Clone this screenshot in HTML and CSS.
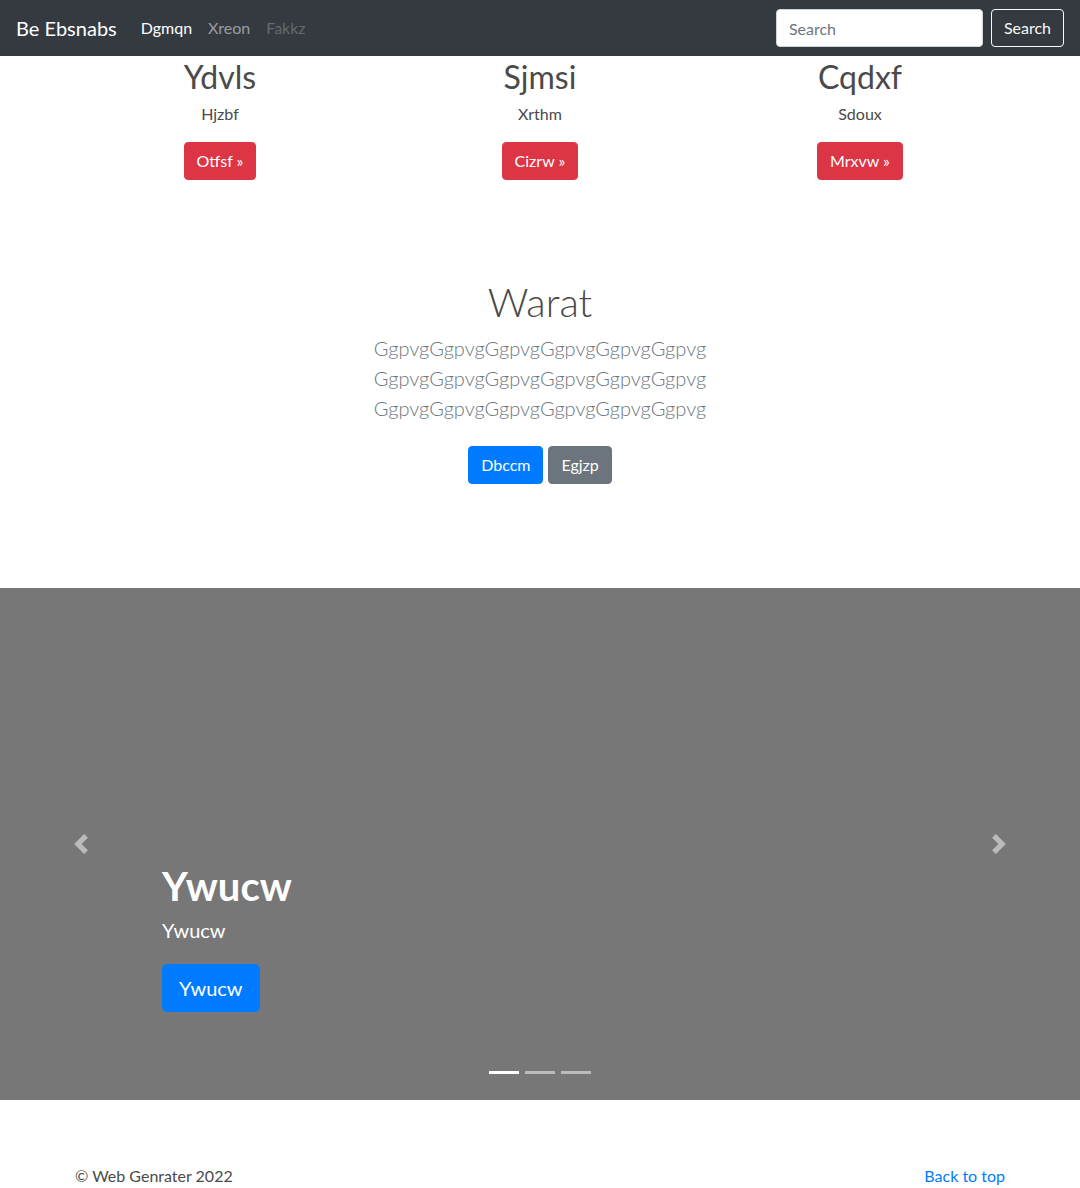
FILE: index.html
```html
<!DOCTYPE html>
<html lang="en">
<head>
<meta charset="utf-8">
<title>Be Ebsnabs</title>
<link rel="stylesheet" href="styles.css">
</head>
<body>
<header class="navbar">
  <a class="brand" href="#">Be Ebsnabs</a>
  <nav class="nav">
    <a class="nav-link active" href="#">Dgmqn</a>
    <a class="nav-link" href="#">Xreon</a>
    <a class="nav-link disabled" href="#">Fakkz</a>
  </nav>
  <form class="search">
    <input class="search-input" type="text" placeholder="Search">
    <button class="btn btn-outline-light" type="button">Search</button>
  </form>
</header>

<main>
  <div class="container marketing">
    <div class="col">
      <h2 class="col-title">Ydvls</h2>
      <p class="col-text">Hjzbf</p>
      <p class="col-action"><a class="btn btn-danger" href="#">Otfsf »</a></p>
    </div>
    <div class="col">
      <h2 class="col-title">Sjmsi</h2>
      <p class="col-text">Xrthm</p>
      <p class="col-action"><a class="btn btn-danger" href="#">Cizrw »</a></p>
    </div>
    <div class="col">
      <h2 class="col-title">Cqdxf</h2>
      <p class="col-text">Sdoux</p>
      <p class="col-action"><a class="btn btn-danger" href="#">Mrxvw »</a></p>
    </div>
  </div>

  <section class="hero">
    <div class="hero-inner">
      <h1 class="hero-title">Warat</h1>
      <p class="lead">GgpvgGgpvgGgpvgGgpvgGgpvgGgpvg GgpvgGgpvgGgpvgGgpvgGgpvgGgpvg GgpvgGgpvgGgpvgGgpvgGgpvgGgpvg</p>
      <p class="hero-actions">
        <a class="btn btn-primary" href="#">Dbccm</a>
        <a class="btn btn-secondary" href="#">Egjzp</a>
      </p>
    </div>
  </section>

  <div class="carousel">
    <ol class="indicators">
      <li class="indicator active"></li>
      <li class="indicator"></li>
      <li class="indicator"></li>
    </ol>
    <div class="caption">
      <h1 class="caption-title">Ywucw</h1>
      <p class="caption-text">Ywucw</p>
      <p class="caption-action"><a class="btn btn-primary btn-lg" href="#">Ywucw</a></p>
    </div>
    <a class="control control-prev" href="#">
      <svg class="control-icon" viewBox="0 0 8 8" width="20" height="20"><path fill="#fff" d="M5.25 0l-4 4 4 4 1.5-1.5L4.25 4l2.5-2.5L5.25 0z"/></svg>
    </a>
    <a class="control control-next" href="#">
      <svg class="control-icon" viewBox="0 0 8 8" width="20" height="20"><path fill="#fff" d="M2.75 0l-1.5 1.5L3.75 4l-2.5 2.5L2.75 8l4-4-4-4z"/></svg>
    </a>
  </div>

  <footer class="container footer">
    <p class="footer-text">© Web Genrater 2022</p>
    <p class="footer-text"><a class="footer-link" href="#">Back to top</a></p>
  </footer>
</main>
</body>
</html>
```

FILE: styles.css
```css
* { box-sizing: border-box; }

html, body {
  margin: 0;
  padding: 0;
}

body {
  font-family: Lato, "Liberation Sans", sans-serif;
  font-size: 16px;
  line-height: 1.5;
  color: #4a4a4a;
  background: #fff;
}

a { text-decoration: none; }

p, h1, h2 { margin: 0; }

/* navbar */
.navbar {
  display: flex;
  align-items: center;
  height: 56px;
  padding: 8px 16px;
  background: #343a40;
}

.brand {
  font-size: 20px;
  line-height: 30px;
  padding: 5px 0;
  margin-right: 16px;
  color: #fff;
}

.nav {
  display: flex;
}

.nav-link {
  padding: 8px;
  color: rgba(255, 255, 255, 0.5);
  line-height: 24px;
}

.nav-link.active { color: #fff; }
.nav-link.disabled { color: rgba(255, 255, 255, 0.25); }

.search {
  margin-left: auto;
  display: flex;
  align-items: center;
}

.search-input {
  width: 207px;
  height: 38px;
  padding: 6px 12px;
  margin-right: 8px;
  font-family: inherit;
  font-size: 16px;
  color: #495057;
  background: #fff;
  border: 1px solid #ced4da;
  border-radius: 4px;
}

.search-input::placeholder { color: #6c757d; }

/* buttons */
.btn {
  display: inline-block;
  padding: 6px 12px;
  font-family: inherit;
  font-size: 16px;
  line-height: 24px;
  border: 1px solid transparent;
  border-radius: 4px;
  color: #fff;
  cursor: pointer;
}

.btn-outline-light {
  background: transparent;
  color: #f8f9fa;
  border-color: #f8f9fa;
}

.btn-danger { background: #dc3545; border-color: #dc3545; }
.btn-primary { background: #007bff; border-color: #007bff; }
.btn-secondary { background: #6c757d; border-color: #6c757d; }

.btn-lg {
  padding: 8px 16px;
  font-size: 20px;
  line-height: 30px;
  border-radius: 5px;
}

/* marketing */
.container {
  width: 960px;
  margin: 0 auto;
  padding: 0 15px;
}

.marketing {
  display: grid;
  grid-template-columns: repeat(3, 1fr);
  padding: 0;
}

.col {
  padding: 0 15px;
  text-align: center;
}

.col-title {
  font-size: 32px;
  font-weight: 400;
  line-height: 38px;
  padding-top: 2px;
  margin-bottom: 6px;
}

.col-text {
  margin-bottom: 16px;
}

.col-action {
  display: flex;
  justify-content: center;
  margin-bottom: 16px;
}

/* hero */
.hero {
  padding: 82px 0 104px;
  text-align: center;
}

.hero-inner {
  width: 450px;
  margin: 0 auto;
}

.hero-title {
  font-size: 40px;
  font-weight: 300;
  line-height: 48px;
  margin-bottom: 7px;
}

.lead {
  font-size: 20px;
  font-weight: 300;
  line-height: 30px;
  color: #6c757d;
  margin-bottom: 23px;
}

.hero-actions {
  display: flex;
  justify-content: center;
  gap: 5px;
}

/* carousel */
.carousel {
  position: relative;
  height: 512px;
  background: #777;
  overflow: hidden;
}

.caption {
  position: absolute;
  left: 15%;
  right: 15%;
  bottom: 48px;
  padding: 20px 0;
  color: #fff;
  text-align: left;
  z-index: 10;
}

.caption-title {
  font-size: 40px;
  font-weight: 700;
  line-height: 48px;
  margin-bottom: 6px;
}

.caption-text {
  font-size: 20px;
  line-height: 28px;
  margin-bottom: 20px;
}

.caption-action {
  margin-bottom: 20px;
  display: flex;
}

.control {
  position: absolute;
  top: 0;
  bottom: 0;
  width: 15%;
  display: flex;
  align-items: center;
  justify-content: center;
  opacity: 0.5;
}

.control-prev { left: 0; }
.control-next { right: 0; }

.control-icon { display: block; }

.indicators {
  position: absolute;
  left: 15%;
  right: 15%;
  bottom: 0;
  margin: 0 0 16px;
  padding: 0;
  list-style: none;
  display: flex;
  justify-content: center;
  z-index: 15;
}

.indicator {
  width: 30px;
  height: 23px;
  margin: 0 3px;
  border-top: 10px solid transparent;
  border-bottom: 10px solid transparent;
  background: #fff;
  background-clip: padding-box;
  opacity: 0.5;
}

.indicator.active { opacity: 1; }

/* footer */
.footer {
  display: flex;
  justify-content: space-between;
  margin-top: 64px;
  padding-bottom: 16px;
}

.footer-text {
  margin-bottom: 16px;
}

.footer-link { color: #007bff; }
```
